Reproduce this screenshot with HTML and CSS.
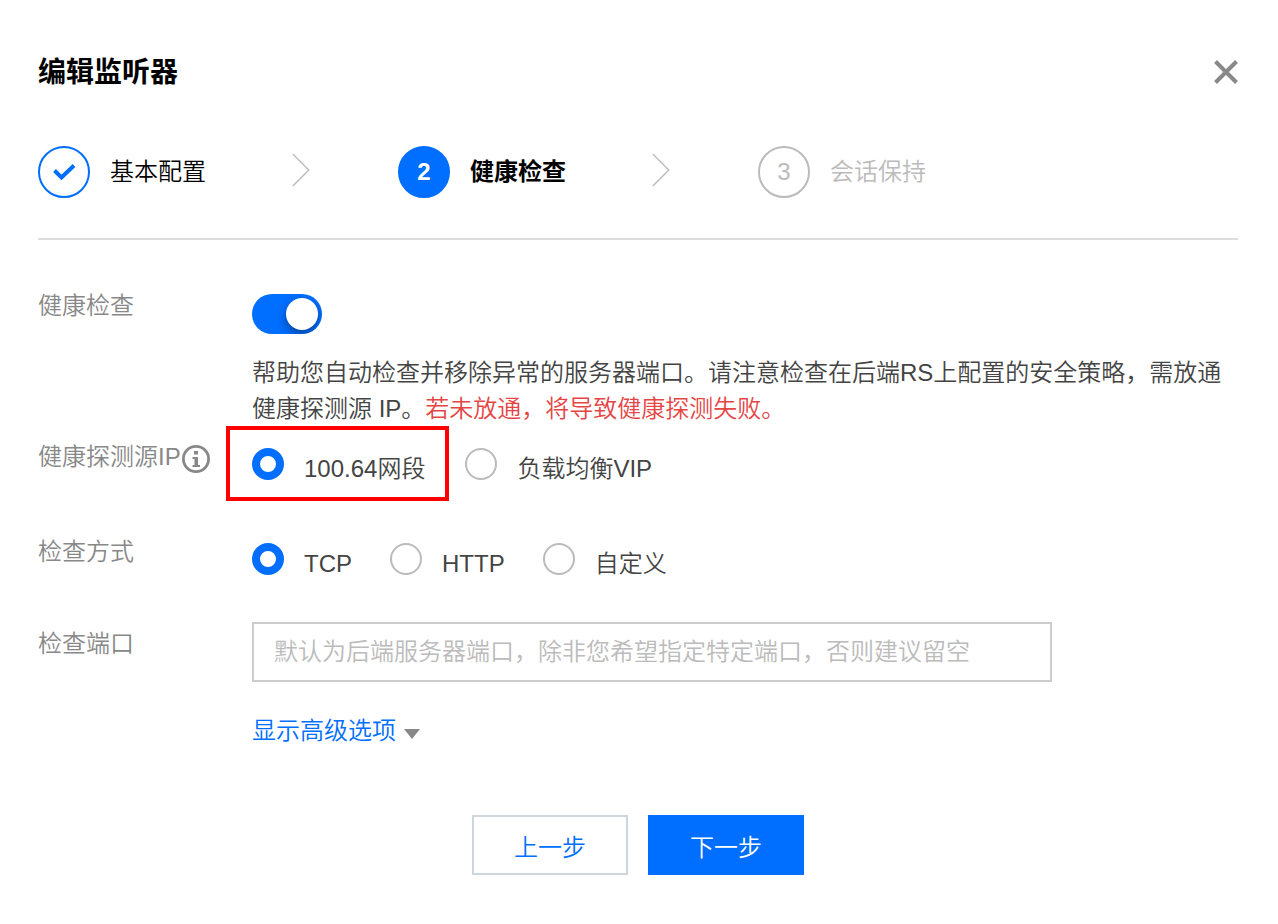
FILE: index.html
```html
<!DOCTYPE html>
<html lang="zh-CN">
<head>
    <meta charset="UTF-8">
    <meta name="viewport" content="width=device-width, initial-scale=1.0">
    <title>编辑监听器</title>
    <link rel="stylesheet" href="styles.css">
</head>
<body>
    <main class="dialog">
        <header class="dialog-header">
            <h1>编辑监听器</h1>
            <button type="button" class="close-button" aria-label="关闭">
                <svg width="24" height="24" viewBox="0 0 24 24" fill="none" stroke="#888" stroke-width="4">
                    <path d="M1.5 1.5l21 21M22.5 1.5l-21 21"/>
                </svg>
            </button>
        </header>

        <!-- Wizard steps -->
        <ol class="steps">
            <li class="step done">
                <span class="step-icon">
                    <svg width="24" height="20" viewBox="0 0 24 20" fill="none" stroke="#006eff" stroke-width="4">
                        <path d="M2.500 8.500l7 7L22 3.500"/>
                    </svg>
                </span>
                <span class="step-name">基本配置</span>
                <svg class="step-arrow" width="18" height="34" viewBox="0 0 18 34" fill="none" stroke="#bbb" stroke-width="1.400">
                    <path d="M.8 1l16 16-16 16"/>
                </svg>
            </li>
            <li class="step current">
                <span class="step-icon">2</span>
                <span class="step-name">健康检查</span>
                <svg class="step-arrow" width="18" height="34" viewBox="0 0 18 34" fill="none" stroke="#bbb" stroke-width="1.400">
                    <path d="M.8 1l16 16-16 16"/>
                </svg>
            </li>
            <li class="step">
                <span class="step-icon">3</span>
                <span class="step-name">会话保持</span>
            </li>
        </ol>

        <form>
            <div class="form-row">
                <label class="form-label" for="health-check">健康检查</label>
                <div class="form-control switch-control">
                    <input type="checkbox" class="switch" id="health-check" checked>
                    <p class="help">帮助您自动检查并移除异常的服务器端口。请注意检查在后端RS上配置的安全策略，需放通健康探测源 IP。<span class="warning">若未放通，将导致健康探测失败。</span></p>
                </div>
            </div>

            <div class="form-row source-row" role="radiogroup" aria-labelledby="source-label">
                <div class="form-label" id="source-label">健康探测源IP<svg class="info-icon" width="28" height="28" viewBox="0 0 28 28">
                        <circle cx="14" cy="14" r="12.600" fill="none" stroke="#888" stroke-width="2.800"/>
                        <path d="M12 6h4v3.500h-4zM10.500 12H16v8h2v2h-7.500v-2h2v-6h-2z" fill="#888"/>
                    </svg></div>
                <div class="form-control radio-group">
                    <label class="radio-option highlight"><input type="radio" name="source" checked>100.64网段</label>
                    <label class="radio-option"><input type="radio" name="source">负载均衡VIP</label>
                </div>
            </div>

            <div class="form-row method-row" role="radiogroup" aria-labelledby="method-label">
                <div class="form-label" id="method-label">检查方式</div>
                <div class="form-control radio-group">
                    <label class="radio-option"><input type="radio" name="method" checked>TCP</label>
                    <label class="radio-option"><input type="radio" name="method">HTTP</label>
                    <label class="radio-option"><input type="radio" name="method">自定义</label>
                </div>
            </div>

            <div class="form-row port-row">
                <label class="form-label" for="port">检查端口</label>
                <div class="form-control">
                    <input type="text" class="text-input" id="port" placeholder="默认为后端服务器端口，除非您希望指定特定端口，否则建议留空">
                    <a href="#" class="advanced-link">显示高级选项<span class="caret"></span></a>
                </div>
            </div>

            <div class="actions">
                <button type="button" class="button">上一步</button>
                <button type="submit" class="button primary">下一步</button>
            </div>
        </form>
    </main>
</body>
</html>
```

FILE: styles.css
```css
* {
    box-sizing: border-box;
}

body {
    margin: 0;
    background-color: #fff;
    color: #444;
    font-family: "Liberation Sans", "Noto Sans CJK SC", sans-serif;
    font-size: 24px;
    font-weight: 350;
    line-height: 36px;
}

.dialog {
    padding: 51px 40px 48px 38px;
}

.dialog-header {
    display: flex;
    align-items: center;
    justify-content: space-between;
}

.dialog-header h1 {
    margin: 0;
    padding-top: 2px;
    color: #000;
    font-size: 28px;
    line-height: 40px;
}

.close-button {
    display: flex;
    padding: 0;
    border: none;
    background: none;
    cursor: pointer;
}

/* Steps */
.steps {
    display: flex;
    margin: 53px 0 48px;
    padding: 0 0 40px;
    border-bottom: 2px solid #ddd;
    list-style: none;
}

.step {
    display: flex;
    flex: 0 0 30%;
    align-items: center;
    gap: 20px;
    color: #bbb;
}

.step-icon {
    display: flex;
    align-items: center;
    justify-content: center;
    width: 52px;
    height: 52px;
    border: 2px solid #bbb;
    border-radius: 50%;
}

.step-arrow {
    margin: 0 88px 4px auto;
}

.done .step-icon {
    border-color: #006eff;
}

.done .step-name,
.current .step-name {
    color: #000;
}

.current {
    font-weight: bold;
}

.current .step-icon {
    border-color: #006eff;
    background-color: #006eff;
    color: #fff;
}

/* Form rows */
.form-row {
    display: flex;
    align-items: flex-start;
}

.form-label {
    display: flex;
    flex: 0 0 214px;
    color: #888;
}

.form-control {
    flex: 1;
    min-width: 0;
}

.info-icon {
    margin: 6px 0 0 1px;
}

.switch-control {
    padding-top: 6px;
}

.switch {
    display: block;
    width: 70px;
    height: 40px;
    margin: 0;
    padding: 4px;
    border-radius: 20px;
    background-color: #006eff;
    appearance: none;
    overflow: hidden;
    cursor: pointer;
}

.switch::before {
    content: "";
    display: block;
    width: 32px;
    height: 32px;
    border-radius: 50%;
    background-color: #fff;
    box-shadow: 0 4px 10px rgba(0, 0, 0, 0.4);
}

.switch:checked::before {
    margin-left: auto;
}

.switch:not(:checked) {
    background-color: #bbb;
}

.help {
    margin: 21px 0 0;
}

.warning {
    color: #e54545;
}

.source-row {
    margin-top: 12px;
}

.method-row {
    margin-top: 44px;
}

.port-row {
    margin-top: 37px;
}

.port-row .form-label {
    padding-top: 4px;
}

.radio-group {
    display: flex;
    gap: 40px;
    padding-top: 9px;
}

.method-row .radio-group {
    gap: 38px;
}

.radio-option {
    position: relative;
    display: flex;
    align-items: flex-start;
    gap: 20px;
    line-height: 42px;
    cursor: pointer;
}

.radio-option input {
    width: 32px;
    height: 32px;
    margin: 0;
    border: 2px solid #bbb;
    border-radius: 50%;
    background-color: #fff;
    appearance: none;
    cursor: pointer;
}

.radio-option input:checked {
    border: 8px solid #006eff;
}

/* Red frame around the option to pick */
.highlight::after {
    content: "";
    position: absolute;
    top: -22px;
    right: -24px;
    bottom: -11px;
    left: -26px;
    border: 4px solid #f00;
    pointer-events: none;
}

.text-input {
    display: block;
    width: 100%;
    max-width: 800px;
    height: 60px;
    padding: 0 20px;
    border: 2px solid #ccc;
    background-color: #fff;
    color: #444;
    font: inherit;
}

.text-input::placeholder {
    color: #bbb;
}

.advanced-link {
    display: inline-flex;
    align-items: center;
    gap: 8px;
    margin-top: 31px;
    color: #006eff;
    text-decoration: none;
}

.caret {
    margin-top: 6px;
    border-top: 10px solid #888;
    border-right: 8px solid transparent;
    border-left: 8px solid transparent;
}

/* Buttons */
.actions {
    display: flex;
    justify-content: center;
    gap: 20px;
    margin-top: 66px;
}

.button {
    width: 156px;
    height: 60px;
    padding: 6px 0 0;
    border: 2px solid #cfd5de;
    background-color: #fff;
    color: #006eff;
    font: inherit;
    cursor: pointer;
}

.button.primary {
    border-color: #006eff;
    background-color: #006eff;
    color: #fff;
}
```
